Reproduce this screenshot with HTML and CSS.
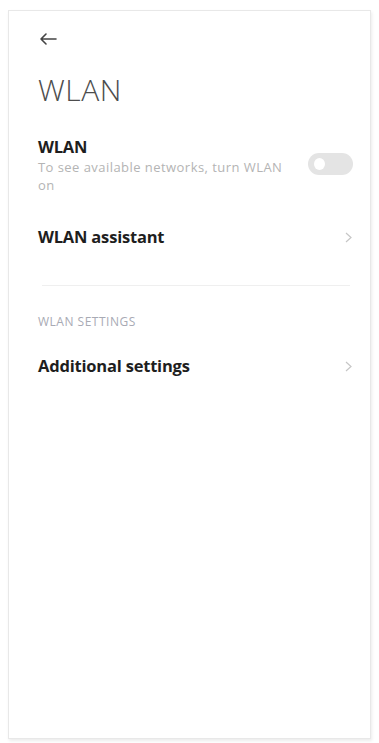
FILE: index.html
```html
<!DOCTYPE html>
<html lang="en">

<head>
  <meta charset="UTF-8">
  <meta name="viewport" content="width=device-width, initial-scale=1.0">
  <title>WLAN</title>
  <link rel="stylesheet" href="styles.css">
</head>

<body>
  <div class="phone">
    <div class="top-bar">
      <svg class="back" width="20" height="14" viewBox="0 0 20 14">
        <path d="M18 7H3M8 2L3 7l5 5" fill="none" stroke="#444" stroke-width="1.6" stroke-linecap="round" stroke-linejoin="round" />
      </svg>
    </div>
    <h1 class="page-title">WLAN</h1>

    <div class="item item-switch">
      <div class="item-text">
        <p class="item-title">WLAN</p>
        <p class="item-desc">To see available networks, turn WLAN on</p>
      </div>
      <span class="switch"><span class="knob"></span></span>
    </div>

    <div class="item item-assistant">
      <p class="item-title">WLAN assistant</p>
      <svg class="chevron" width="7" height="11" viewBox="0 0 7 11">
        <path d="M1 1l5 4.5L1 10" fill="none" stroke="#c6c6c6" stroke-width="1.2" />
      </svg>
    </div>

    <div class="divider"></div>

    <p class="group-title">WLAN SETTINGS</p>

    <div class="item">
      <p class="item-title">Additional settings</p>
      <svg class="chevron" width="7" height="11" viewBox="0 0 7 11">
        <path d="M1 1l5 4.5L1 10" fill="none" stroke="#c6c6c6" stroke-width="1.2" />
      </svg>
    </div>
  </div>
</body>

</html>
```

FILE: styles.css
```css
* {
  box-sizing: border-box;
  padding: 0;
  margin: 0;
}

html,
body {
  width: 100%;
  height: 100%;
  background-color: #fff;
}

body {
  padding: 10px 8px 4px 8px;
  font-family: "Open Sans", "Noto Sans", sans-serif;
  color: #222;
}

.phone {
  height: 729px;
  width: 363px;
  border: 1px solid #e8e8e8;
  box-shadow: 1px 2px 3px rgba(0, 0, 0, 0.08);
  padding: 0 17px 0 29px;
}

.top-bar {
  height: 50px;
  padding-top: 21px;
}

.back {
  display: block;
}

.page-title {
  font-size: 30px;
  font-weight: 300;
  color: #4d4d4d;
  line-height: 36px;
  margin-top: 11px;
  letter-spacing: 0.5px;
}

.item {
  display: flex;
  align-items: center;
  justify-content: space-between;
  height: 56px;
}

.item-switch {
  margin-top: 28px;
  height: 58px;
  align-items: flex-start;
}

.item-assistant {
  margin-top: 15px;
}

.item-text {
  width: 255px;
}

.item-title {
  font-size: 16.5px;
  font-weight: 700;
  color: #1e1e1e;
  line-height: 22px;
  letter-spacing: -0.2px;
}

.item-desc {
  font-size: 13px;
  color: #b4b4b4;
  line-height: 18px;
  letter-spacing: 0.45px;
}

.switch {
  width: 45px;
  height: 22px;
  border-radius: 11px;
  background-color: #e4e4e4;
  margin-top: 17px;
  padding: 5px 0 0 6px;
}

.knob {
  display: block;
  width: 11px;
  height: 12px;
  border-radius: 50%;
  background-color: #fff;
}

.chevron {
  display: block;
  margin-right: 1px;
}

.divider {
  height: 1px;
  background-color: #efefef;
  margin: 20px 3px 0 4px;
}

.group-title {
  font-size: 12px;
  color: #a8aab4;
  margin-top: 29px;
  line-height: 14px;
  letter-spacing: 0.5px;
}

.group-title + .item {
  margin-top: 9px;
}
```
